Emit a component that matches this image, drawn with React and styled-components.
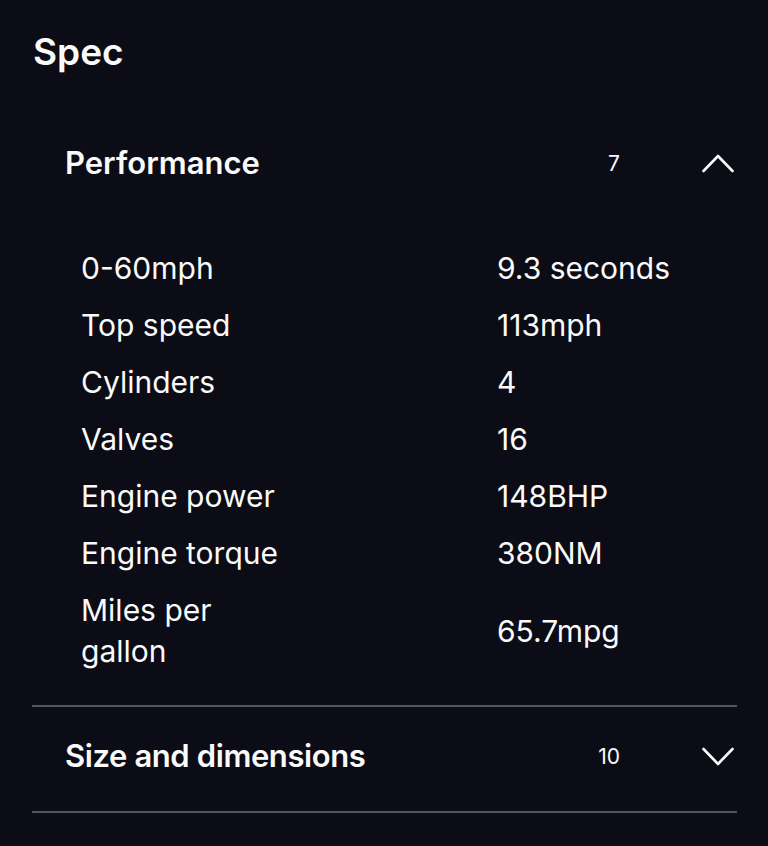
import React from "react";
import styled, { createGlobalStyle } from "styled-components";

const Global = createGlobalStyle`
  html, body { margin: 0; padding: 0; background: #0b0c15; }
  body { font-family: Inter, "Noto Sans", "Liberation Sans", sans-serif; color: #fafafa; }
`;

const Page = styled.main`
  width: 768px;
  min-height: 846px;
  box-sizing: border-box;
  padding: 30px 32px 0 33px;
  background: #0b0c15;
`;

const Title = styled.h1`
  margin: 0;
  font-size: 37px;
  line-height: 43px;
  font-weight: 600;
  letter-spacing: 0;
`;

const Section = styled.section`
  border-bottom: ${(p) => (p.$divider ? "2px solid #55565d" : "none")};
  margin-right: -1px;
  margin-left: -1px;
`;

const Header = styled.div`
  display: flex;
  align-items: center;
  box-sizing: border-box;
  height: ${(p) => p.$h}px;
  padding: 0 3px ${(p) => p.$pb || 0}px 33px;
`;

const HeaderTitle = styled.h2`
  flex: 1;
  margin: 0;
  font-size: 31px;
  font-weight: 600;
  line-height: 1.2;
  letter-spacing: ${(p) => p.$ls || 0}px;
`;

const Count = styled.span`
  font-size: 21px;
  font-weight: 400;
  line-height: 1;
`;

const Chevron = styled.svg`
  width: 32px;
  height: 20px;
  margin-left: 82px;
  display: block;
`;

const Rows = styled.dl`
  margin: 0;
  padding: 40px 0 33px 49px;
  display: grid;
  grid-template-columns: 212px 1fr;
  column-gap: 204px;
  row-gap: 16px;
  align-items: center;
`;

const Label = styled.dt`
  margin: 0;
  font-size: 30px;
  line-height: 41px;
  font-weight: 400;
`;

const Value = styled.dd`
  margin: 0;
  font-size: 30px;
  line-height: 41px;
  font-weight: 400;
`;

const ChevronIcon = ({ up }) => (
  <Chevron viewBox="0 0 32 20" fill="none">
    <polyline
      points={up ? "1.5,18 16,3 30.5,18" : "1.5,3 16,18 30.5,3"}
      stroke="#fafafa"
      strokeWidth="2.6"
      strokeLinecap="round"
      strokeLinejoin="round"
    />
  </Chevron>
);

const performance = [
  ["0-60mph", "9.3 seconds"],
  ["Top speed", "113mph"],
  ["Cylinders", "4"],
  ["Valves", "16"],
  ["Engine power", "148BHP"],
  ["Engine torque", "380NM"],
  ["Miles per gallon", "65.7mpg"],
];

export default function App() {
  return (
    <>
      <Global />
      <Page>
        <Title>Spec</Title>
        <Section $divider style={{ marginTop: 45 }}>
          <Header $h={90}>
            <HeaderTitle>Performance</HeaderTitle>
            <Count>7</Count>
            <ChevronIcon up />
          </Header>
          <Rows>
            {performance.map(([k, v]) => (
              <React.Fragment key={k}>
                <Label>{k}</Label>
                <Value>{v}</Value>
              </React.Fragment>
            ))}
          </Rows>
        </Section>
        <Section $divider>
          <Header $h={104} $pb={6}>
            <HeaderTitle $ls={-0.4}>Size and dimensions</HeaderTitle>
            <Count>10</Count>
            <ChevronIcon />
          </Header>
        </Section>
      </Page>
    </>
  );
}
